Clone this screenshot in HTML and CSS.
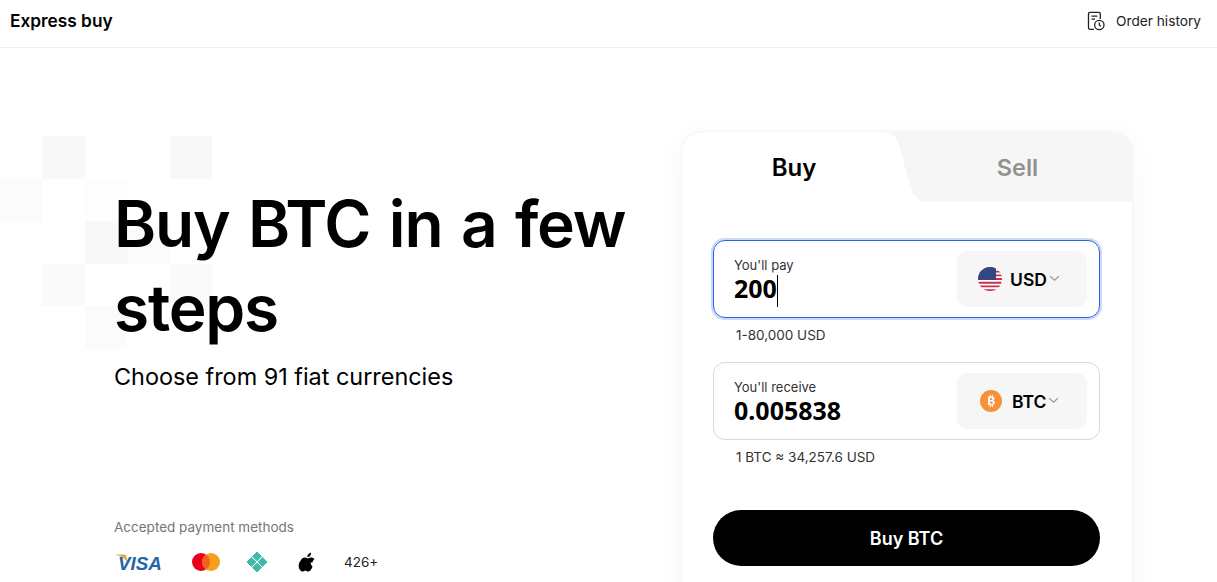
FILE: index.html
```html
<!DOCTYPE html>
<html lang="en">
<head>
<meta charset="utf-8">
<title>Express buy</title>
<link rel="stylesheet" href="styles.css">
</head>
<body>
<header class="topbar">
  <div class="brand">Express buy</div>
  <a class="history">
    <svg class="history-icon" viewBox="0 0 18 20" fill="none" stroke="#222" stroke-width="1.3">
      <path d="M7 18.400H3.200a1.700 1.700 0 0 1-1.700-1.700V3a1.700 1.700 0 0 1 1.700-1.700h8.400A1.700 1.700 0 0 1 13.300 3v5"/>
      <path d="M4.500 5.200h5.800M4.500 8.200h3.500"/>
      <circle cx="12.300" cy="14" r="4.700"/>
      <path d="M12.300 11.500V14l1.700 1.200"/>
    </svg>
    <span>Order history</span>
  </a>
</header>
<main class="page">
  <div class="pattern" aria-hidden="true">
    <i class="sq s1"></i><i class="sq s2"></i><i class="sq s3"></i><i class="sq s4"></i><i class="sq s5"></i><i class="sq s6"></i><i class="sq s7"></i><i class="sq s8"></i><i class="sq s9"></i>
  </div>
  <section class="intro">
    <h1>Buy BTC in a few steps</h1>
    <p class="sub">Choose from 91 fiat currencies</p>
    <div class="methods">
      <div class="methods-label">Accepted payment methods</div>
      <div class="methods-row">
        <svg class="visa" viewBox="0 0 47 19">
          <path d="M0 1.500h8c1.500 0 2.200.7 2.500 1.900L12 11C10 6.500 6 3 0 2z" fill="#e0a855"/>
          <text x="2" y="17" class="visa-text">VISA</text>
        </svg>
        <svg class="mc" viewBox="0 0 28 18">
          <circle cx="9" cy="9" r="9" fill="#e8001c"/>
          <circle cx="19" cy="9" r="9" fill="#f79e1b"/>
          <path d="M14 1.500a9 9 0 0 1 0 15a9 9 0 0 1 0-15z" fill="#f26122"/>
        </svg>
        <svg class="diamond" viewBox="0 0 22 22" fill="#3fb9aa" stroke="#3fb9aa" stroke-width="1" stroke-linejoin="round">
          <path d="M11 1l4.400 4.400L11 9.800 6.600 5.400z"/>
          <path d="M11 12.200l4.400 4.400L11 21 6.600 16.600z"/>
          <path d="M5.400 6.600L9.800 11 5.400 15.400 1 11z"/>
          <path d="M16.600 6.600L21 11 16.600 15.400 12.200 11z"/>
        </svg>
        <svg class="apple" viewBox="0 0 18 21" fill="#000">
          <path d="M14.800 11.100c0-2.300 1.900-3.400 2-3.500-1.100-1.600-2.800-1.800-3.400-1.800-1.400-.1-2.800.9-3.500.9-.7 0-1.900-.9-3.100-.8-1.600 0-3.100.9-3.900 2.300C.2 11-.5 15.500 1.100 18c.8 1.200 1.800 2.600 3 2.500 1.200 0 1.700-.8 3.200-.8s1.900.8 3.200.8c1.300 0 2.200-1.200 3-2.400.9-1.400 1.300-2.700 1.400-2.800-.1 0-2.100-1.300-2.100-4.200z"/>
          <path d="M12.300 3.900C13 3.100 13.400 2 13.300.8c-1 0-2.200.7-2.900 1.500-.6.700-1.200 1.900-1 3 1.100.1 2.200-.6 2.900-1.400z"/>
        </svg>
        <span class="more">426+</span>
      </div>
    </div>
  </section>
  <section class="card">
    <div class="tabs">
      <svg class="tab-bg" viewBox="0 0 450 70" preserveAspectRatio="none">
        <path d="M200 0Q213 0 217 13L229 57Q233 70 247 70H450V0Z" fill="#f6f6f6"/>
      </svg>
      <div class="tab tab-buy">Buy</div>
      <div class="tab tab-sell">Sell</div>
    </div>
    <div class="form">
      <div class="field field-active">
        <div class="field-main">
          <div class="field-label">You'll pay</div>
          <div class="field-value">200<span class="caret"></span></div>
        </div>
        <div class="currency">
          <svg class="coin" viewBox="0 0 24 24">
            <defs>
              <clipPath id="flag"><circle cx="12" cy="12" r="12"/></clipPath>
              <pattern id="stars" width="1.600" height="1.600" patternUnits="userSpaceOnUse"><rect width="1.600" height="1.600" fill="#27397a"/><circle cx=".8" cy=".8" r=".35" fill="#8f9cc6"/></pattern>
            </defs>
            <g clip-path="url(#flag)">
              <rect width="24" height="24" fill="#fff"/>
              <path d="M0 0h24v1.850H0zM0 3.700h24v1.850H0zM0 7.400h24v1.850H0zM0 11.100h24v1.850H0zM0 14.800h24v1.850H0zM0 18.500h24v1.850H0zM0 22.200h24v1.850H0z" fill="#c8304f"/>
              <rect width="18" height="12.950" fill="url(#stars)"/>
            </g>
          </svg>
          <span class="cur-name">USD</span>
          <svg class="chev" viewBox="0 0 10 6" fill="none" stroke="#999" stroke-width="1.100"><path d="M1 1l4 3.500L9 1"/></svg>
        </div>
      </div>
      <div class="hint">1-80,000 USD</div>
      <div class="field field-second">
        <div class="field-main">
          <div class="field-label">You'll receive</div>
          <div class="field-value">0.005838</div>
        </div>
        <div class="currency">
          <svg class="coin coin-btc" viewBox="0 0 22 22">
            <circle cx="11" cy="11" r="11" fill="#f7923a"/>
            <path d="M8 6.500h3.700c1.700 0 2.700.8 2.700 2.100 0 1-.6 1.700-1.400 1.900 1.100.2 1.800 1 1.800 2.100 0 1.500-1.100 2.400-3 2.400H8zM10 8.100v2h1.300c.8 0 1.100-.4 1.100-1s-.3-1-1.100-1zm0 3.500v2.200h1.500c.9 0 1.300-.4 1.300-1.100s-.4-1.100-1.300-1.100zM9.700 5h1.200v1.500H9.700zM11.800 5H13v1.500h-1.200zM9.700 15h1.200v2H9.700zM11.800 15H13v2h-1.200z" fill="#fff" fill-rule="evenodd"/>
          </svg>
          <span class="cur-name">BTC</span>
          <svg class="chev" viewBox="0 0 10 6" fill="none" stroke="#999" stroke-width="1.100"><path d="M1 1l4 3.500L9 1"/></svg>
        </div>
      </div>
      <div class="hint">1 BTC ≈ 34,257.6 USD</div>
      <button class="buy-btn">Buy BTC</button>
    </div>
  </section>
</main>
</body>
</html>
```
FILE: styles.css
```css
* { box-sizing: border-box; }
html, body { margin: 0; height: 582px; overflow: hidden; background: #fff; }
body { font-family: Inter, "Noto Sans", "Liberation Sans", sans-serif; color: #000; }
.topbar { height: 48px; padding: 0 16px 6px 10px; display: flex; align-items: center; justify-content: space-between; border-bottom: 1px solid #f0f0f0; }
.brand { font-size: 17.300px; font-weight: 600; }
.history { display: flex; align-items: center; gap: 11px; font-size: 13.700px; color: #222; }
.history-icon { width: 18px; height: 20px; }
.page { position: relative; display: flex; justify-content: space-between; padding: 84px 85px 0 114px; height: 534px; overflow: hidden; }
.pattern { position: absolute; left: 0; top: 88px; width: 212px; height: 213px; display: grid; grid-template-columns: repeat(5, 42.400px); grid-template-rows: repeat(5, 42.600px); z-index: 0; }
.sq { display: block; }
.s1 { grid-area: 1 / 2; background: #f8f8f8; }
.s2 { grid-area: 1 / 5; background: #f8f8f8; }
.s3 { grid-area: 2 / 1; background: #fbfbfb; }
.s4 { grid-area: 2 / 3; background: #fdfdfd; }
.s5 { grid-area: 3 / 3; background: #f8f8f8; }
.s6 { grid-area: 3 / 4; background: #fbfbfb; }
.s7 { grid-area: 4 / 2; background: #fafafa; }
.s8 { grid-area: 4 / 5; background: #fafafa; }
.s9 { grid-area: 5 / 3; background: #fbfbfb; }
.intro { position: relative; z-index: 1; width: 530px; padding-top: 50px; }
h1 { margin: 0; font-size: 64px; line-height: 84px; font-weight: 600; letter-spacing: -1.200px; word-spacing: 3.600px; }
.sub { margin: 10px 0 0; font-size: 23.400px; line-height: 34px; }
.methods { margin-top: 123px; }
.methods-label { font-size: 13.500px; line-height: 20px; color: #757575; }
.methods-row { margin-top: 14px; display: flex; align-items: center; height: 22px; }
.visa { width: 47px; height: 19px; margin-right: 31px; margin-left: 2px; overflow: visible; }
.visa-text { font: italic 700 18.800px "Liberation Sans", sans-serif; fill: #2566a8; }
.mc { width: 28px; height: 18px; margin-right: 26px; margin-left: -2px; }
.diamond { width: 22px; height: 22px; margin-right: 30px; }
.apple { width: 18px; height: 20px; margin-right: 28px; }
.more { font-size: 13.500px; color: #222; }
.card { position: relative; z-index: 1; width: 450px; height: 520px; border-radius: 20px; background: #fff; box-shadow: 0 0 2px rgba(0,0,0,.1), 0 4px 28px rgba(0,0,0,.04); overflow: hidden; flex: none; }
.tabs { position: relative; display: flex; height: 70px; }
.tab-bg { position: absolute; inset: 0; width: 100%; height: 100%; }
.tab { position: relative; font-size: 24px; font-weight: 600; line-height: 72px; text-align: center; }
.tab-buy { width: 224px; }
.tab-sell { flex: 1; color: #929292; font-size: 23.500px; padding-right: 3px; }
.form { padding: 38px 32px 0 31px; }
.field { height: 78px; border: 1px solid #d9d9d9; border-radius: 12px; padding: 10px 12px 10px 20px; display: flex; align-items: center; justify-content: space-between; }
.field-active { border-color: #2a5ff0; box-shadow: 0 0 0 2px #cdd9f6; }
.field-main { padding-top: 1px; }
.field-label { font-size: 13px; line-height: 16px; color: #333; }
.field-value { font-family: "Noto Sans", sans-serif; font-size: 25px; font-weight: 700; line-height: 30px; }
.caret { display: inline-block; width: 1px; height: 32px; margin: -6px 0; background: #000; vertical-align: middle; }
.currency { width: 130px; height: 56px; border-radius: 10px; background: #f6f6f6; display: flex; align-items: center; padding-left: 21px; gap: 8px; }
.coin { width: 24px; height: 24px; flex: none; }
.coin-btc { width: 22px; height: 22px; margin-left: 2px; margin-right: 2px; }
.cur-name { font-size: 17.500px; font-weight: 600; }
.chev { width: 11px; height: 7px; margin-left: -6px; margin-top: -2px; }
.hint { font-size: 13.500px; line-height: 20px; color: #333; padding: 7px 0 0 23px; height: 44px; }
.buy-btn { display: block; margin-top: 26px; width: 387px; height: 56px; border: 0; border-radius: 28px; background: #000; color: #fff; font: 600 18px Inter, sans-serif; }
```
